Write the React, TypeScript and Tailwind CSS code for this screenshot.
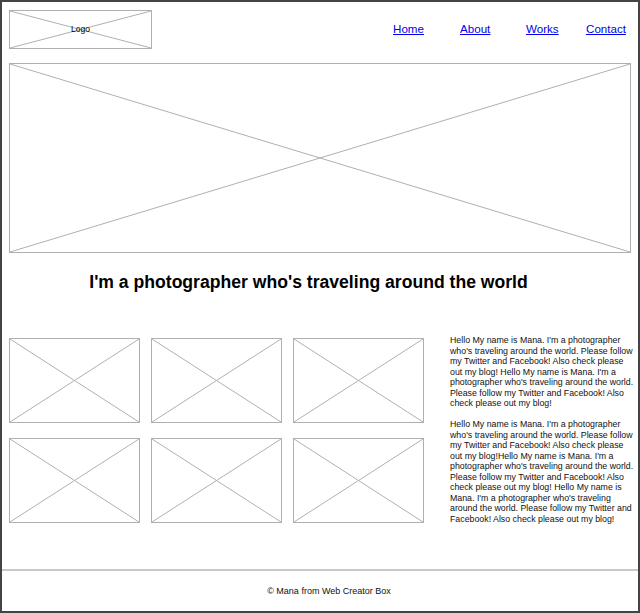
import { ReactNode } from 'react';

function Placeholder({ className, children }: { className?: string; children?: ReactNode }) {
  return (
    <div className={`relative border border-[#b0b0b0] ${className ?? ''}`}>
      <svg
        className="absolute inset-0 h-full w-full"
        viewBox="0 0 100 100"
        preserveAspectRatio="none"
      >
        <line x1="0" y1="0" x2="100" y2="100" stroke="#b0b0b0" strokeWidth="1" vectorEffect="non-scaling-stroke" />
        <line x1="100" y1="0" x2="0" y2="100" stroke="#b0b0b0" strokeWidth="1" vectorEffect="non-scaling-stroke" />
      </svg>
      {children}
    </div>
  );
}

const navItems = [
  { label: 'Home', width: 'w-[67px]' },
  { label: 'About', width: 'w-[66px]' },
  { label: 'Works', width: 'w-[60px]' },
  { label: 'Contact', width: '' },
];

export default function App() {
  return (
    <div className="flex h-[613px] w-[640px] flex-col border-2 border-[#444] bg-white font-['Liberation_Sans',Arial,sans-serif] text-[#111]">
      {/* ヘッダー */}
      <header className="flex items-center justify-between pl-[7px] pr-[12px] pt-[8px]">
        <Placeholder className="flex h-[39px] w-[143px] items-center justify-center">
          <span className="relative text-[8.5px] text-black">Logo</span>
        </Placeholder>
        <nav className="-mt-[2px] flex items-center">
          {navItems.map(item => (
            <a key={item.label} href="#" className={`${item.width} text-[11.6px] text-[#0000ee] underline`}>
              {item.label}
            </a>
          ))}
        </nav>
      </header>

      {/* メイン画像 */}
      <div className="px-[7px] pt-[14px]">
        <Placeholder className="h-[190px] w-full" />
      </div>

      <h1 className="flex justify-center pr-[23px] pt-[18px] text-[17.6px] font-bold leading-[22px] text-black">
        I'm a photographer who's traveling around the world
      </h1>

      {/* ギャラリー + 紹介文 */}
      <main className="flex pl-[7px] pr-[4px] pt-[45px]">
        <div className="grid w-[415px] grid-cols-3 gap-x-[11px] gap-y-[14px]">
          {Array.from({ length: 6 }).map((_, i) => (
            <Placeholder key={i} className="h-[85px]" />
          ))}
        </div>
        <div className="ml-[26px] -mt-[3px] flex-1 space-y-[10.5px] text-[8.8px] leading-[10.5px]">
          <p>
            Hello My name is Mana. I'm a photographer who's traveling around the world. Please follow my Twitter and
            Facebook! Also check please out my blog! Hello My name is Mana. I'm a photographer who's traveling around
            the world. Please follow my Twitter and Facebook! Also check please out my blog!
          </p>
          <p>
            Hello My name is Mana. I'm a photographer who's traveling around the world. Please follow my Twitter and
            Facebook! Also check please out my blog!Hello My name is Mana. I'm a photographer who's traveling around the
            world. Please follow my Twitter and Facebook! Also check please out my blog! Hello My name is Mana. I'm a
            photographer who's traveling around the world. Please follow my Twitter and Facebook! Also check please out
            my blog!
          </p>
        </div>
      </main>

      {/* フッター */}
      <footer className="mt-auto border-t-2 border-[#c8c8c8] pb-[14px] pl-[18px] pt-[15px] text-center text-[9px] leading-[11px]">
        © Mana from Web Creator Box
      </footer>
    </div>
  );
}
